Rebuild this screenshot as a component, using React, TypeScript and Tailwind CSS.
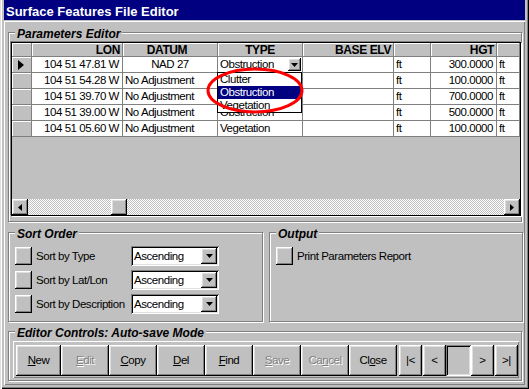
import React from 'react';

const btnBevel =
  'shadow-[inset_-1px_-1px_0_#000,inset_1px_1px_0_#fff,inset_-2px_-2px_0_#808080,inset_2px_2px_0_#dfdfdf]';
const cellBevel = 'shadow-[inset_1px_1px_0_#fff]';
const fieldBevel =
  'shadow-[inset_1px_1px_0_#808080,inset_-1px_-1px_0_#fff,inset_2px_2px_0_#000,inset_-2px_-2px_0_#dfdfdf]';
const uiFont = "font-['Liberation_Sans',Arial,sans-serif] text-[11.5px] tracking-[-0.45px]";
const headCell = 'h-[14px] border-b border-r border-[#808080] text-[12px] font-bold leading-[14px] tracking-[-0.4px]';

type Row = { lon: string; datum: string; type: string; hgt: string; center?: boolean };

const rows: Row[] = [
  { lon: '104 51 47.81 W', datum: 'NAD 27', type: 'Obstruction', hgt: '300.0000', center: true },
  { lon: '104 51 54.28 W', datum: 'No Adjustment', type: 'Clutter', hgt: '100.0000' },
  { lon: '104 51 39.70 W', datum: 'No Adjustment', type: 'Obstruction', hgt: '700.0000' },
  { lon: '104 51 39.00 W', datum: 'No Adjustment', type: 'Obstruction', hgt: '500.0000' },
  { lon: '104 51 05.60 W', datum: 'No Adjustment', type: 'Vegetation', hgt: '100.0000' },
];

function DownArrow() {
  return (
    <svg width="7" height="4" viewBox="0 0 7 4">
      <path d="M0 0h7L3.5 4z" fill="#000" />
    </svg>
  );
}

function Group({
  title,
  className,
  children,
}: {
  title: string;
  className: string;
  children?: React.ReactNode;
}) {
  return (
    <div
      className={`relative border border-[#808080] shadow-[inset_1px_1px_0_#fff,1px_1px_0_#fff] ${className}`}
    >
      <span className="absolute left-[6px] top-[-6px] bg-[#c0c0c0] px-[2px] font-['Liberation_Sans',Arial,sans-serif] text-[12px] font-bold italic leading-[14px] tracking-normal text-black">
        {title}
      </span>
      {children}
    </div>
  );
}

function Select() {
  return (
    <div className={`flex h-[20px] w-[88px] items-center bg-white p-[2px] ${fieldBevel}`}>
      <span className="flex-1 pl-[1px] leading-[16px] text-black">Ascending</span>
      <span className={`flex h-[16px] w-[16px] items-center justify-center bg-[#c0c0c0] ${btnBevel}`}>
        <DownArrow />
      </span>
    </div>
  );
}

function SortRow({ label }: { label: string }) {
  return (
    <div className="flex h-[24px] items-center pl-[6px]">
      <span className={`h-[18px] w-[17px] bg-[#c0c0c0] ${btnBevel}`} />
      <span className="ml-[4px] w-[95px] whitespace-nowrap leading-[14px]">{label}</span>
      <Select />
    </div>
  );
}

function Btn({
  width,
  disabled,
  children,
}: {
  width: string;
  disabled?: boolean;
  children: React.ReactNode;
}) {
  return (
    <div
      className={`flex h-[31px] items-center justify-center bg-[#c0c0c0] ${btnBevel} ${width} ${
        disabled ? 'text-[#808080] [text-shadow:1px_1px_0_#fff]' : 'text-black'
      }`}
    >
      {children}
    </div>
  );
}

export default function App() {
  return (
    <div
      className={`relative h-[389px] w-[529px] overflow-hidden bg-[#c0c0c0] px-[4px] text-black ${uiFont} shadow-[inset_1px_0_0_#dfdfdf,inset_2px_0_0_#fff,inset_-1px_-1px_0_#000,inset_-2px_-2px_0_#808080]`}
    >
      {/* Title bar */}
      <div className="flex h-[20px] items-center bg-[#000080] pl-[2px] pt-[3px] text-[13px] font-bold tracking-normal text-white">
        Surface Features File Editor
      </div>

      {/* Client */}
      <div className="mt-[1px] h-[364px] pl-[4px] pt-[11px] shadow-[inset_1px_1px_0_#fff,inset_-1px_-1px_0_#808080]">
        <Group title="Parameters Editor" className="h-[190px] w-[514px]">
          <div className="ml-[2px] mt-[9px] flex h-[174px] w-[510px] flex-col overflow-hidden border border-black bg-[#c0c0c0] shadow-[-1px_-1px_0_#808080,1px_1px_0_#fff]">
            <div className="grid grid-cols-[20px_91px_95px_85px_91px_37px_66px_23px] leading-[14px]">
              {/* header */}
              <div className={`${headCell} ${cellBevel}`} />
              <div className={`${headCell} pr-[2px] text-right ${cellBevel}`}>LON</div>
              <div className={`${headCell} pr-[6px] text-center ${cellBevel}`}>DATUM</div>
              <div className={`${headCell} text-center ${cellBevel}`}>TYPE</div>
              <div className={`${headCell} pr-[2px] text-right ${cellBevel}`}>BASE ELV</div>
              <div className={`${headCell} ${cellBevel}`} />
              <div className={`${headCell} pr-[2px] text-right ${cellBevel}`}>HGT</div>
              <div className={`${headCell} ${cellBevel}`} />

              {rows.map((r, i) => (
                <React.Fragment key={i}>
                  <div className={`flex h-[16px] items-center border-b border-r border-[#808080] pl-[6px] ${cellBevel}`}>
                    {i === 0 && (
                      <svg width="6" height="10" viewBox="0 0 6 10">
                        <path d="M0 0L6 5L0 10z" fill="#000" />
                      </svg>
                    )}
                  </div>
                  <div className="h-[16px] border-b border-r border-[#808080] bg-white pr-[3px] text-right leading-[15px]">{r.lon}</div>
                  <div className={`h-[16px] border-b border-r border-[#808080] bg-white px-[2px] leading-[15px] ${r.center ? 'text-center' : 'text-left'}`}>
                    {r.datum}
                  </div>
                  <div className="flex h-[16px] items-start justify-between border-b border-r border-[#808080] bg-white pl-[2px] pr-[1px] leading-[15px]">
                    <span>{r.type}</span>
                    {i === 0 && (
                      <span className={`mt-[1px] flex h-[13px] w-[13px] items-center justify-center bg-[#c0c0c0] ${btnBevel}`}>
                        <DownArrow />
                      </span>
                    )}
                  </div>
                  <div className="h-[16px] border-b border-r border-[#808080] bg-white" />
                  <div className="h-[16px] border-b border-r border-[#808080] bg-white pl-[2px] leading-[15px]">ft</div>
                  <div className="h-[16px] border-b border-r border-[#808080] bg-white pr-[3px] text-right leading-[15px]">{r.hgt}</div>
                  <div className="h-[16px] border-b border-r border-[#808080] bg-white pl-[2px] leading-[15px]">ft</div>
                </React.Fragment>
              ))}
            </div>

            <div className="flex-1" />

            {/* horizontal scrollbar */}
            <div className="flex h-[16px]">
              <div className={`flex h-[16px] w-[16px] items-center justify-center bg-[#c0c0c0] ${btnBevel}`}>
                <svg width="4" height="7" viewBox="0 0 4 7">
                  <path d="M4 0v7L0 3.5z" fill="#000" />
                </svg>
              </div>
              <div className="flex flex-1 bg-[image:conic-gradient(#c0c0c0_25%,#fff_0_50%,#c0c0c0_0_75%,#fff_0)] bg-[length:2px_2px]">
                <div className={`ml-[83px] h-[16px] w-[16px] bg-[#c0c0c0] ${btnBevel}`} />
              </div>
              <div className={`flex h-[16px] w-[16px] items-center justify-center bg-[#c0c0c0] ${btnBevel}`}>
                <svg width="4" height="7" viewBox="0 0 4 7">
                  <path d="M0 0v7L4 3.5z" fill="#000" />
                </svg>
              </div>
            </div>
          </div>
        </Group>

        <div className="mt-[10px] flex gap-[6px]">
          <Group title="Sort Order" className="h-[90px] w-[255px]">
            <div className="mt-[11px] flex flex-col">
              <SortRow label="Sort by Type" />
              <SortRow label="Sort by Lat/Lon" />
              <SortRow label="Sort by Description" />
            </div>
          </Group>
          <Group title="Output" className="h-[90px] w-[254px]">
            <div className="mt-[11px] flex h-[24px] items-center pl-[6px]">
              <span className={`h-[18px] w-[17px] bg-[#c0c0c0] ${btnBevel}`} />
              <span className="ml-[4px] leading-[14px]">Print Parameters Report</span>
            </div>
          </Group>
        </div>

        <Group title="Editor Controls: Auto-save Mode" className="mt-[9px] h-[50px] w-[514px]">
          <div className="ml-[4px] mt-[9px] flex h-[37px] w-[506px] items-start pl-[3px] pt-[4px] shadow-[inset_1px_1px_0_#fff,inset_-1px_-1px_0_#808080]">
            <Btn width="w-[45px]"><span><u>N</u>ew</span></Btn>
            <Btn width="w-[48px]" disabled><span><u>E</u>dit</span></Btn>
            <Btn width="w-[48px]"><span><u>C</u>opy</span></Btn>
            <Btn width="w-[48px]"><span><u>D</u>el</span></Btn>
            <Btn width="w-[48px]"><span><u>F</u>ind</span></Btn>
            <Btn width="w-[48px]" disabled><span><u>S</u>ave</span></Btn>
            <Btn width="w-[48px]" disabled><span>Ca<u>n</u>cel</span></Btn>
            <Btn width="w-[48px]"><span>Cl<u>o</u>se</span></Btn>
            <div className="w-[2px]" />
            <Btn width="w-[23px]"><span>|&lt;</span></Btn>
            <div className="w-[1px]" />
            <Btn width="w-[23px]"><span>&lt;</span></Btn>
            <div className={`h-[31px] w-[25px] bg-[#c0c0c0] ${fieldBevel}`} />
            <Btn width="w-[23px]"><span>&gt;</span></Btn>
            <div className="w-[1px]" />
            <Btn width="w-[23px]"><span>&gt;|</span></Btn>
          </div>
        </Group>
      </div>

      {/* Open TYPE drop-down list */}
      <div className="absolute left-[217px] top-[72px] w-[85px] border border-black bg-white leading-[13px]">
        <div className="h-[13px] pl-[2px]">Clutter</div>
        <div className="h-[13px] bg-[#000080] pl-[2px] text-white">Obstruction</div>
        <div className="h-[13px] pl-[2px]">Vegetation</div>
      </div>

      {/* Red annotation ellipse */}
      <svg className="pointer-events-none absolute left-[204px] top-[64px]" width="104" height="54" viewBox="0 0 104 54">
        <ellipse cx="51" cy="26.5" rx="47" ry="21.5" fill="none" stroke="#ff0000" strokeWidth="3" />
      </svg>
    </div>
  );
}
